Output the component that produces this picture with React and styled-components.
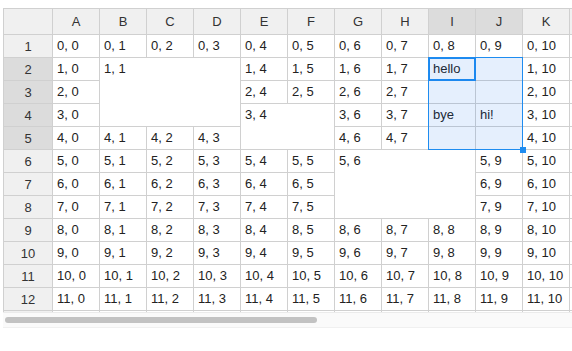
import React from "react";
import styled, { createGlobalStyle } from "styled-components";

const COLS = 12; // columns drawn (the rest lie beyond the view)
const TOTAL_COLS = 21; // columns the sheet holds, for the scroll thumb
const ROWS = 13;
const VIEW_W = 569;

// merged ranges, 0-based data coordinates
const merges = [
  { r: 1, c: 1, rs: 3, cs: 3 },
  { r: 3, c: 4, rs: 2, cs: 2 },
  { r: 5, c: 6, rs: 3, cs: 3 },
];

const custom = {
  "1,8": "hello",
  "1,9": "",
  "2,8": "",
  "2,9": "",
  "3,8": "bye",
  "3,9": "hi!",
  "4,8": "",
  "4,9": "",
};

const selection = { r1: 1, r2: 4, c1: 8, c2: 9 };

const GlobalStyle = createGlobalStyle`
  body {
    margin: 0;
    overflow: hidden;
    background: #ffffff;
    font-family: "Liberation Sans", Arial, sans-serif;
  }
`;

const Frame = styled.div`
  width: ${VIEW_W}px;
  margin: 8px 0 0 3px;
  display: flex;
  flex-direction: column;
`;

const Viewport = styled.div`
  height: 304px;
  overflow: hidden;
`;

const ScrollTrack = styled.div`
  height: 16px;
  box-sizing: border-box;
  padding: 4px 2px 4px 2px;
  background: #fafafa;
  border-top: 1px solid #ebebeb;
  border-bottom: 1px solid #f0f0f0;
`;

const ScrollThumb = styled.div`
  height: 100%;
  border-radius: 4px;
  background: #c2c2c2;
`;

const Sheet = styled.div`
  display: grid;
  grid-template-columns: 48px repeat(${COLS}, 46px);
  grid-template-rows: 25px repeat(${ROWS}, 22px);
  gap: 1px;
  padding: 1px;
  width: max-content;
  background: #d0d0d0;
  font-size: 13px;
  color: #222222;
`;

const Header = styled.div`
  grid-row: ${(p) => p.$row};
  grid-column: ${(p) => p.$col};
  display: flex;
  align-items: center;
  justify-content: center;
  background: ${(p) => (p.$active ? "#dcdcdc" : "#f0f0f0")};
  color: #333333;
`;

const Cell = styled.div`
  grid-row: ${(p) => p.$row} / span ${(p) => p.$rowSpan || 1};
  grid-column: ${(p) => p.$col} / span ${(p) => p.$colSpan || 1};
  background: #ffffff;
  padding: 0 4px;
  line-height: 22px;
  white-space: nowrap;
  overflow: hidden;
  outline: ${(p) => (p.$focused ? "2px solid #1e8cf0" : "none")};
  outline-offset: -1px;
`;

const Selection = styled.div`
  grid-row: ${(p) => p.$row} / span ${(p) => p.$rowSpan};
  grid-column: ${(p) => p.$col} / span ${(p) => p.$colSpan};
  margin: -1px;
  position: relative;
  border: 1px solid #1e8cf0;
  background: rgba(20, 110, 235, 0.11);
  pointer-events: none;
`;

const FillHandle = styled.div`
  position: absolute;
  right: -4px;
  bottom: -4px;
  width: 6px;
  height: 6px;
  background: #1e8cf0;
`;

const colName = (i) => String.fromCharCode(65 + i);

function covered(r, c) {
  return merges.some(
    (m) =>
      r >= m.r && r < m.r + m.rs && c >= m.c && c < m.c + m.cs &&
      !(r === m.r && c === m.c)
  );
}

function mergeAt(r, c) {
  return merges.find((m) => m.r === r && m.c === c);
}

const App = () => {
  const items = [];
  const contentWidth = 48 + TOTAL_COLS * 47 + 2;
  const thumbWidth = Math.round((VIEW_W / contentWidth) * VIEW_W);

  items.push(<Header key="corner" $row={1} $col={1} />);
  for (let c = 0; c < COLS; c++) {
    items.push(
      <Header
        key={`h${c}`}
        $row={1}
        $col={c + 2}
        $active={c >= selection.c1 && c <= selection.c2}
      >
        {colName(c)}
      </Header>
    );
  }

  for (let r = 0; r < ROWS; r++) {
    items.push(
      <Header
        key={`r${r}`}
        $row={r + 2}
        $col={1}
        $active={r >= selection.r1 && r <= selection.r2}
      >
        {r + 1}
      </Header>
    );
    for (let c = 0; c < COLS; c++) {
      if (covered(r, c)) continue;
      const m = mergeAt(r, c);
      const key = `${r},${c}`;
      const text = key in custom ? custom[key] : `${r}, ${c}`;
      items.push(
        <Cell
          key={`c${key}`}
          $row={r + 2}
          $col={c + 2}
          $rowSpan={m ? m.rs : 1}
          $colSpan={m ? m.cs : 1}
          $focused={r === selection.r1 && c === selection.c1}
        >
          {text}
        </Cell>
      );
    }
  }

  return (
    <>
      <GlobalStyle />
      <Frame>
        <Viewport>
          <Sheet>
            {items}
            <Selection
              $row={selection.r1 + 2}
              $col={selection.c1 + 2}
              $rowSpan={selection.r2 - selection.r1 + 1}
              $colSpan={selection.c2 - selection.c1 + 1}
            >
              <FillHandle />
            </Selection>
          </Sheet>
        </Viewport>
        <ScrollTrack>
          <ScrollThumb style={{ width: thumbWidth }} />
        </ScrollTrack>
      </Frame>
    </>
  );
};

export default App;
